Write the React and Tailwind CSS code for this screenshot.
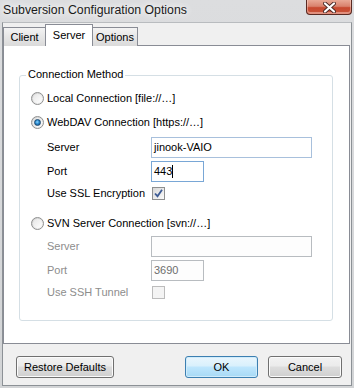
import React from "react";

function Radio({ checked }) {
  return (
    <span className="w-[13px] h-[13px] shrink-0 rounded-full border border-[#8e8f8f] bg-[linear-gradient(135deg,#cfcfcf,#f7f7f7)] flex items-center justify-center">
      <span className="w-[9px] h-[9px] rounded-full bg-[linear-gradient(135deg,#e6e6e6,#ffffff)] flex items-center justify-center">
        {checked && (
          <span className="w-[7px] h-[7px] rounded-full border border-[#1c4a72] bg-[radial-gradient(circle_at_45%_40%,#8fd6ff_0%,#2a8bd0_45%,#124a7e_100%)]" />
        )}
      </span>
    </span>
  );
}

function Check({ checked, disabled }) {
  return (
    <span
      className={
        "w-[13px] h-[13px] shrink-0 border flex items-center justify-center " +
        (disabled
          ? "border-[#bcbcbc] bg-[#f4f4f4]"
          : "border-[#8e8f8f] bg-[linear-gradient(135deg,#d8d8d8,#fafafa)]")
      }
    >
      {checked && (
        <svg width="9" height="9" viewBox="0 0 9 9">
          <path d="M1 4.5 L3.5 7.2 L8 0.8" fill="none" stroke="#3d5b94" strokeWidth="1.8" />
        </svg>
      )}
    </span>
  );
}

function Input({ value, width, focused, disabled, caret }) {
  return (
    <div
      className={
        "h-[21px] flex items-center pl-[2px] border " +
        width +
        " " +
        (disabled
          ? "border-[#b8bcc0] bg-[#fdfdfd] text-[#6d6d6d]"
          : focused
          ? "border-[#79a7d6] bg-white text-black"
          : "border-[#a8c0dc] bg-white text-black")
      }
    >
      <span>{value}</span>
      {caret && <span className="w-[1px] h-[13px] bg-black" />}
    </div>
  );
}

function Btn({ children, width, primary }) {
  return (
    <div
      className={
        "h-[22px] rounded-[3px] border flex items-center justify-center " +
        width +
        " " +
        (primary
          ? "border-[#3c7fb1] bg-[linear-gradient(to_bottom,#eaf6fd_0%,#d9f0fc_45%,#bee6fd_50%,#a7d9f5_100%)] shadow-[inset_0_0_0_1px_#d0ecfb]"
          : "border-[#707070] bg-[linear-gradient(to_bottom,#f2f2f2_0%,#ebebeb_45%,#dddddd_50%,#cfcfcf_100%)] shadow-[inset_0_0_0_1px_#fbfbfb]")
      }
    >
      {children}
    </div>
  );
}

export default function App() {
  return (
    <div className="w-[354px] h-[388px] flex flex-col px-[2px] pb-[2px] bg-[linear-gradient(to_bottom,#dcdddf,#d2d4d6)] font-['Liberation_Sans',Arial,sans-serif] text-[11px] text-black overflow-hidden">
      {/* Title bar */}
      <div className="h-[22px] flex items-start justify-between shrink-0">
        <span className="pl-[1px] pt-[3px] text-[12.3px] leading-[14px] text-[#1a1a1a] [text-shadow:0_0_6px_#ffffff,0_0_10px_#ffffff]">
          Subversion Configuration Options
        </span>
        <div className="w-[46px] h-[15px] rounded-b-[4px] border border-t-0 border-[#5a2a22] bg-[linear-gradient(to_bottom,#e9a996_0%,#d9826d_45%,#c7492f_55%,#c9563c_100%)] shadow-[inset_0_-1px_0_1px_rgba(255,220,210,0.45)] flex items-center justify-center">
          <svg width="13" height="11" viewBox="0 0 13 11">
            <path d="M2 1.5 L11 9.5 M11 1.5 L2 9.5" stroke="#4a2a26" strokeWidth="4" strokeLinecap="round" />
            <path d="M2 1.5 L11 9.5 M11 1.5 L2 9.5" stroke="#ffffff" strokeWidth="2.2" strokeLinecap="round" />
          </svg>
        </div>
      </div>

      {/* Client area */}
      <div className="flex-1 flex flex-col bg-[#f0f0f0] border border-[#8c9196] border-t-[#b9bcbf]">
        {/* Tabs */}
        <div className="relative z-10 flex items-end pt-[1px] -mb-[1px] h-[23px]">
          <div className="w-[43px] h-[19px] border border-b-0 border-[#898c95] bg-[linear-gradient(to_bottom,#f3f3f3,#e6e6e6_50%,#dadada)] flex items-center justify-center pt-[1px]">
            Client
          </div>
          <div className="-ml-[1px] w-[48px] h-[22px] border border-b-0 border-[#898c95] bg-white flex items-start justify-center pt-[3px] leading-[14px]">
            Server
          </div>
          <div className="-ml-[1px] w-[46px] h-[19px] border border-b-0 border-[#898c95] bg-[linear-gradient(to_bottom,#f3f3f3,#e6e6e6_50%,#dadada)] flex items-center justify-center pt-[1px]">
            Options
          </div>
        </div>

        {/* Panel */}
        <div className="w-[347px] h-[299px] border border-[#898c95] bg-white shrink-0">
          <div className="relative ml-[15px] mt-[29px] w-[314px] h-[246px] border border-[#d5dfe5] rounded-[3px]">
            <span className="absolute left-[6px] top-[-8px] px-[2px] bg-white leading-[13px]">
              Connection Method
            </span>
            <div className="flex flex-col pt-[15px] pl-[11px] leading-[13px]">
              <div className="h-[14px] flex items-center gap-[3px]">
                <Radio />
                <span>Local Connection [file://…]</span>
              </div>
              <div className="mt-[10px] h-[14px] flex items-center gap-[3px]">
                <Radio checked />
                <span>WebDAV Connection [https://…]</span>
              </div>
              <div className="mt-[8px] h-[21px] flex items-center pl-[16px]">
                <span className="w-[104px]">Server</span>
                <Input value="jinook-VAIO" width="w-[161px]" />
              </div>
              <div className="mt-[3px] h-[21px] flex items-center pl-[16px]">
                <span className="w-[104px]">Port</span>
                <Input value="443" width="w-[53px]" focused caret />
              </div>
              <div className="mt-[4px] h-[14px] flex items-center pl-[16px]">
                <span className="w-[105px]">Use SSL Encryption</span>
                <Check checked />
              </div>
              <div className="mt-[16px] h-[14px] flex items-center gap-[3px]">
                <Radio />
                <span>SVN Server Connection [svn://…]</span>
              </div>
              <div className="mt-[6px] h-[21px] flex items-center pl-[16px] text-[#8d8d8d]">
                <span className="w-[104px]">Server</span>
                <Input value="" width="w-[161px]" disabled />
              </div>
              <div className="mt-[3px] h-[21px] flex items-center pl-[16px] text-[#8d8d8d]">
                <span className="w-[104px]">Port</span>
                <Input value="3690" width="w-[53px]" disabled />
              </div>
              <div className="mt-[4px] h-[14px] flex items-center pl-[16px] text-[#8d8d8d]">
                <span className="w-[105px]">Use SSH Tunnel</span>
                <Check disabled />
              </div>
            </div>
          </div>
        </div>

        {/* Buttons */}
        <div className="mt-[12px] flex items-center pl-[13px] pr-[9px]">
          <Btn width="w-[98px]">Restore Defaults</Btn>
          <div className="flex-1" />
          <Btn width="w-[73px]" primary>OK</Btn>
          <div className="w-[10px]" />
          <Btn width="w-[74px]">Cancel</Btn>
        </div>
      </div>
    </div>
  );
}
